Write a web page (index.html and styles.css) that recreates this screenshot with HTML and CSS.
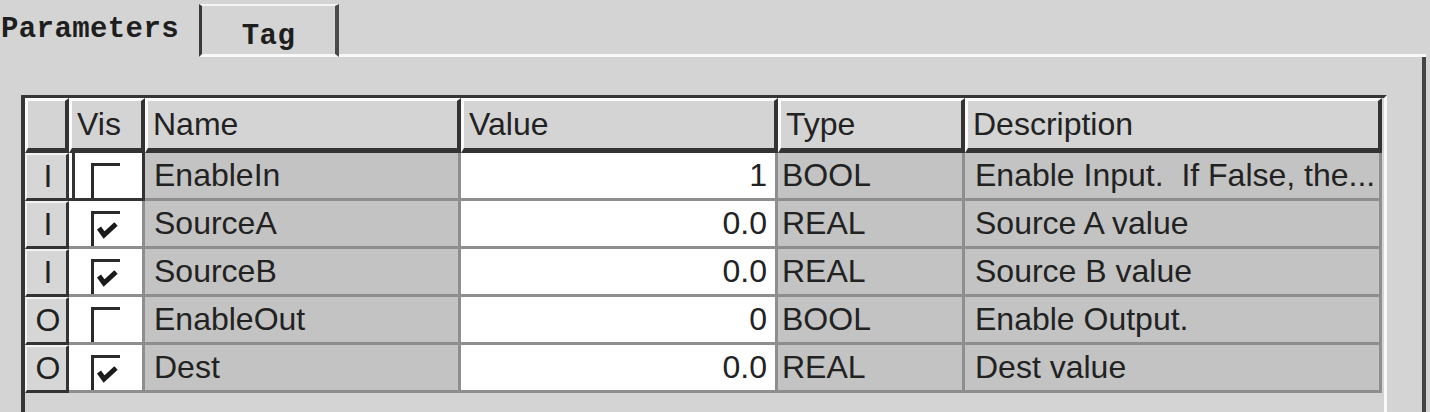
FILE: index.html
```html
<!DOCTYPE html>
<html lang="en">
<head>
    <meta charset="UTF-8">
    <title>Parameters</title>
    <link rel="stylesheet" href="styles.css">
</head>
<body>
    <div class="dialog">
        <div class="tabs">
            <div class="tab active">Parameters</div>
            <div class="tab">Tag</div>
            <div class="tab-rest"></div>
        </div>

        <div class="page">
            <div class="frame">
                <div class="grid">
                    <!-- header -->
                    <div class="hd"></div>
                    <div class="hd">Vis</div>
                    <div class="hd">Name</div>
                    <div class="hd">Value</div>
                    <div class="hd">Type</div>
                    <div class="hd">Description</div>

                    <div class="rh">I</div>
                    <div class="cell vis cur"><span class="check"></span></div>
                    <div class="cell name">EnableIn</div>
                    <div class="cell value">1</div>
                    <div class="cell type">BOOL</div>
                    <div class="cell desc">Enable Input.&nbsp; If False, the...</div>

                    <div class="rh">I</div>
                    <div class="cell vis"><span class="check"><svg width="26" height="32"><polyline points="5,14 10,21 22,10" /></svg></span></div>
                    <div class="cell name">SourceA</div>
                    <div class="cell value">0.0</div>
                    <div class="cell type">REAL</div>
                    <div class="cell desc">Source A value</div>

                    <div class="rh">I</div>
                    <div class="cell vis"><span class="check"><svg width="26" height="32"><polyline points="5,14 10,21 22,10" /></svg></span></div>
                    <div class="cell name">SourceB</div>
                    <div class="cell value">0.0</div>
                    <div class="cell type">REAL</div>
                    <div class="cell desc">Source B value</div>

                    <div class="rh">O</div>
                    <div class="cell vis"><span class="check"></span></div>
                    <div class="cell name">EnableOut</div>
                    <div class="cell value">0</div>
                    <div class="cell type">BOOL</div>
                    <div class="cell desc">Enable Output.</div>

                    <div class="rh">O</div>
                    <div class="cell vis"><span class="check"><svg width="26" height="32"><polyline points="5,14 10,21 22,10" /></svg></span></div>
                    <div class="cell name">Dest</div>
                    <div class="cell value">0.0</div>
                    <div class="cell type">REAL</div>
                    <div class="cell desc">Dest value</div>
                </div>
            </div>
        </div>
    </div>
</body>
</html>
```

FILE: styles.css
```css
body {
    margin: 0;
    background: #d4d4d4;
    color: #222;
    font-family: "Liberation Sans", Arial, sans-serif;
    overflow: hidden;
}
.dialog {
    width: 1426px;
    height: 412px;
}

/* tab strip */
.tabs {
    display: flex;
    height: 57px;
}
.tab {
    box-sizing: border-box;
    font: bold 29px "Liberation Mono", monospace;
    letter-spacing: 0.4px;
    color: #1e1e1e;
}
.tab.active {
    width: 199px;
    padding: 13px 0 0 1px;
}
.tab:not(.active) {
    width: 140px;
    margin-top: 4px;
    padding-top: 14px;
    text-align: center;
    border-left: 3px solid #3a3a3a;
    border-top: 2px solid #f4f4f4;
    border-right: 4px solid #4a4a4a;
    border-bottom: 3px solid #f8f8f8;
}
.tab-rest {
    flex: 1;
    align-self: flex-end;
    border-bottom: 3px solid #f8f8f8;
}

/* page */
.page {
    box-sizing: border-box;
    height: 355px;
    padding: 38px 0 0 21px;
    border-right: 4px solid #454545;
}
.frame {
    box-sizing: border-box;
    width: 1366px;
    height: 330px;
    border-left: 4px solid #363636;
    border-top: 3px solid #363636;
    border-right: 3px solid #fafafa;
}

/* grid */
.grid {
    display: grid;
    grid-template-columns: 44px 76px 316px 317px 187px 417px;
    grid-template-rows: 55px repeat(5, 48px);
    font-size: 32px;
}
.grid > div {
    box-sizing: border-box;
    display: flex;
    align-items: center;
    white-space: nowrap;
    overflow: hidden;
}
.hd {
    background: #d4d4d4;
    border-top: 3px solid #fafafa;
    border-left: 3px solid #fafafa;
    border-right: 4px solid #333;
    border-bottom: 5px solid #333;
    padding-left: 5px;
}
.rh {
    justify-content: center;
    background: #d6d6d6;
    border-top: 2px solid #f2f2f2;
    border-left: 2px solid #f2f2f2;
    border-right: 3px solid #333;
    border-bottom: 3px solid #333;
    padding-left: 3px;
}
.cell {
    border-right: 3px solid #8e8e8e;
    border-bottom: 3px solid #8e8e8e;
}
.vis {
    background: #fff;
    align-items: flex-end !important;
    padding-left: 22px;
}
.vis.cur {
    border-right-color: #333;
    border-bottom-color: #333;
    box-shadow: inset 3px 0 0 #fff, inset 6px 0 0 #333;
}
.name, .type, .desc {
    background: #c3c3c3;
}
.name {
    padding-left: 9px;
}
.value {
    background: #fff;
    justify-content: flex-end;
    padding-right: 8px;
}
.type {
    padding-left: 4px;
}
.desc {
    padding-left: 10px;
}

/* checkbox */
.check {
    display: block;
    width: 29px;
    height: 35px;
    box-sizing: border-box;
    border-left: 3px solid #2a2a2a;
    border-top: 3px solid #2a2a2a;
    background: #fff;
}
.check svg {
    display: block;
}
.check polyline {
    fill: none;
    stroke: #1a1a1a;
    stroke-width: 5;
}
```
